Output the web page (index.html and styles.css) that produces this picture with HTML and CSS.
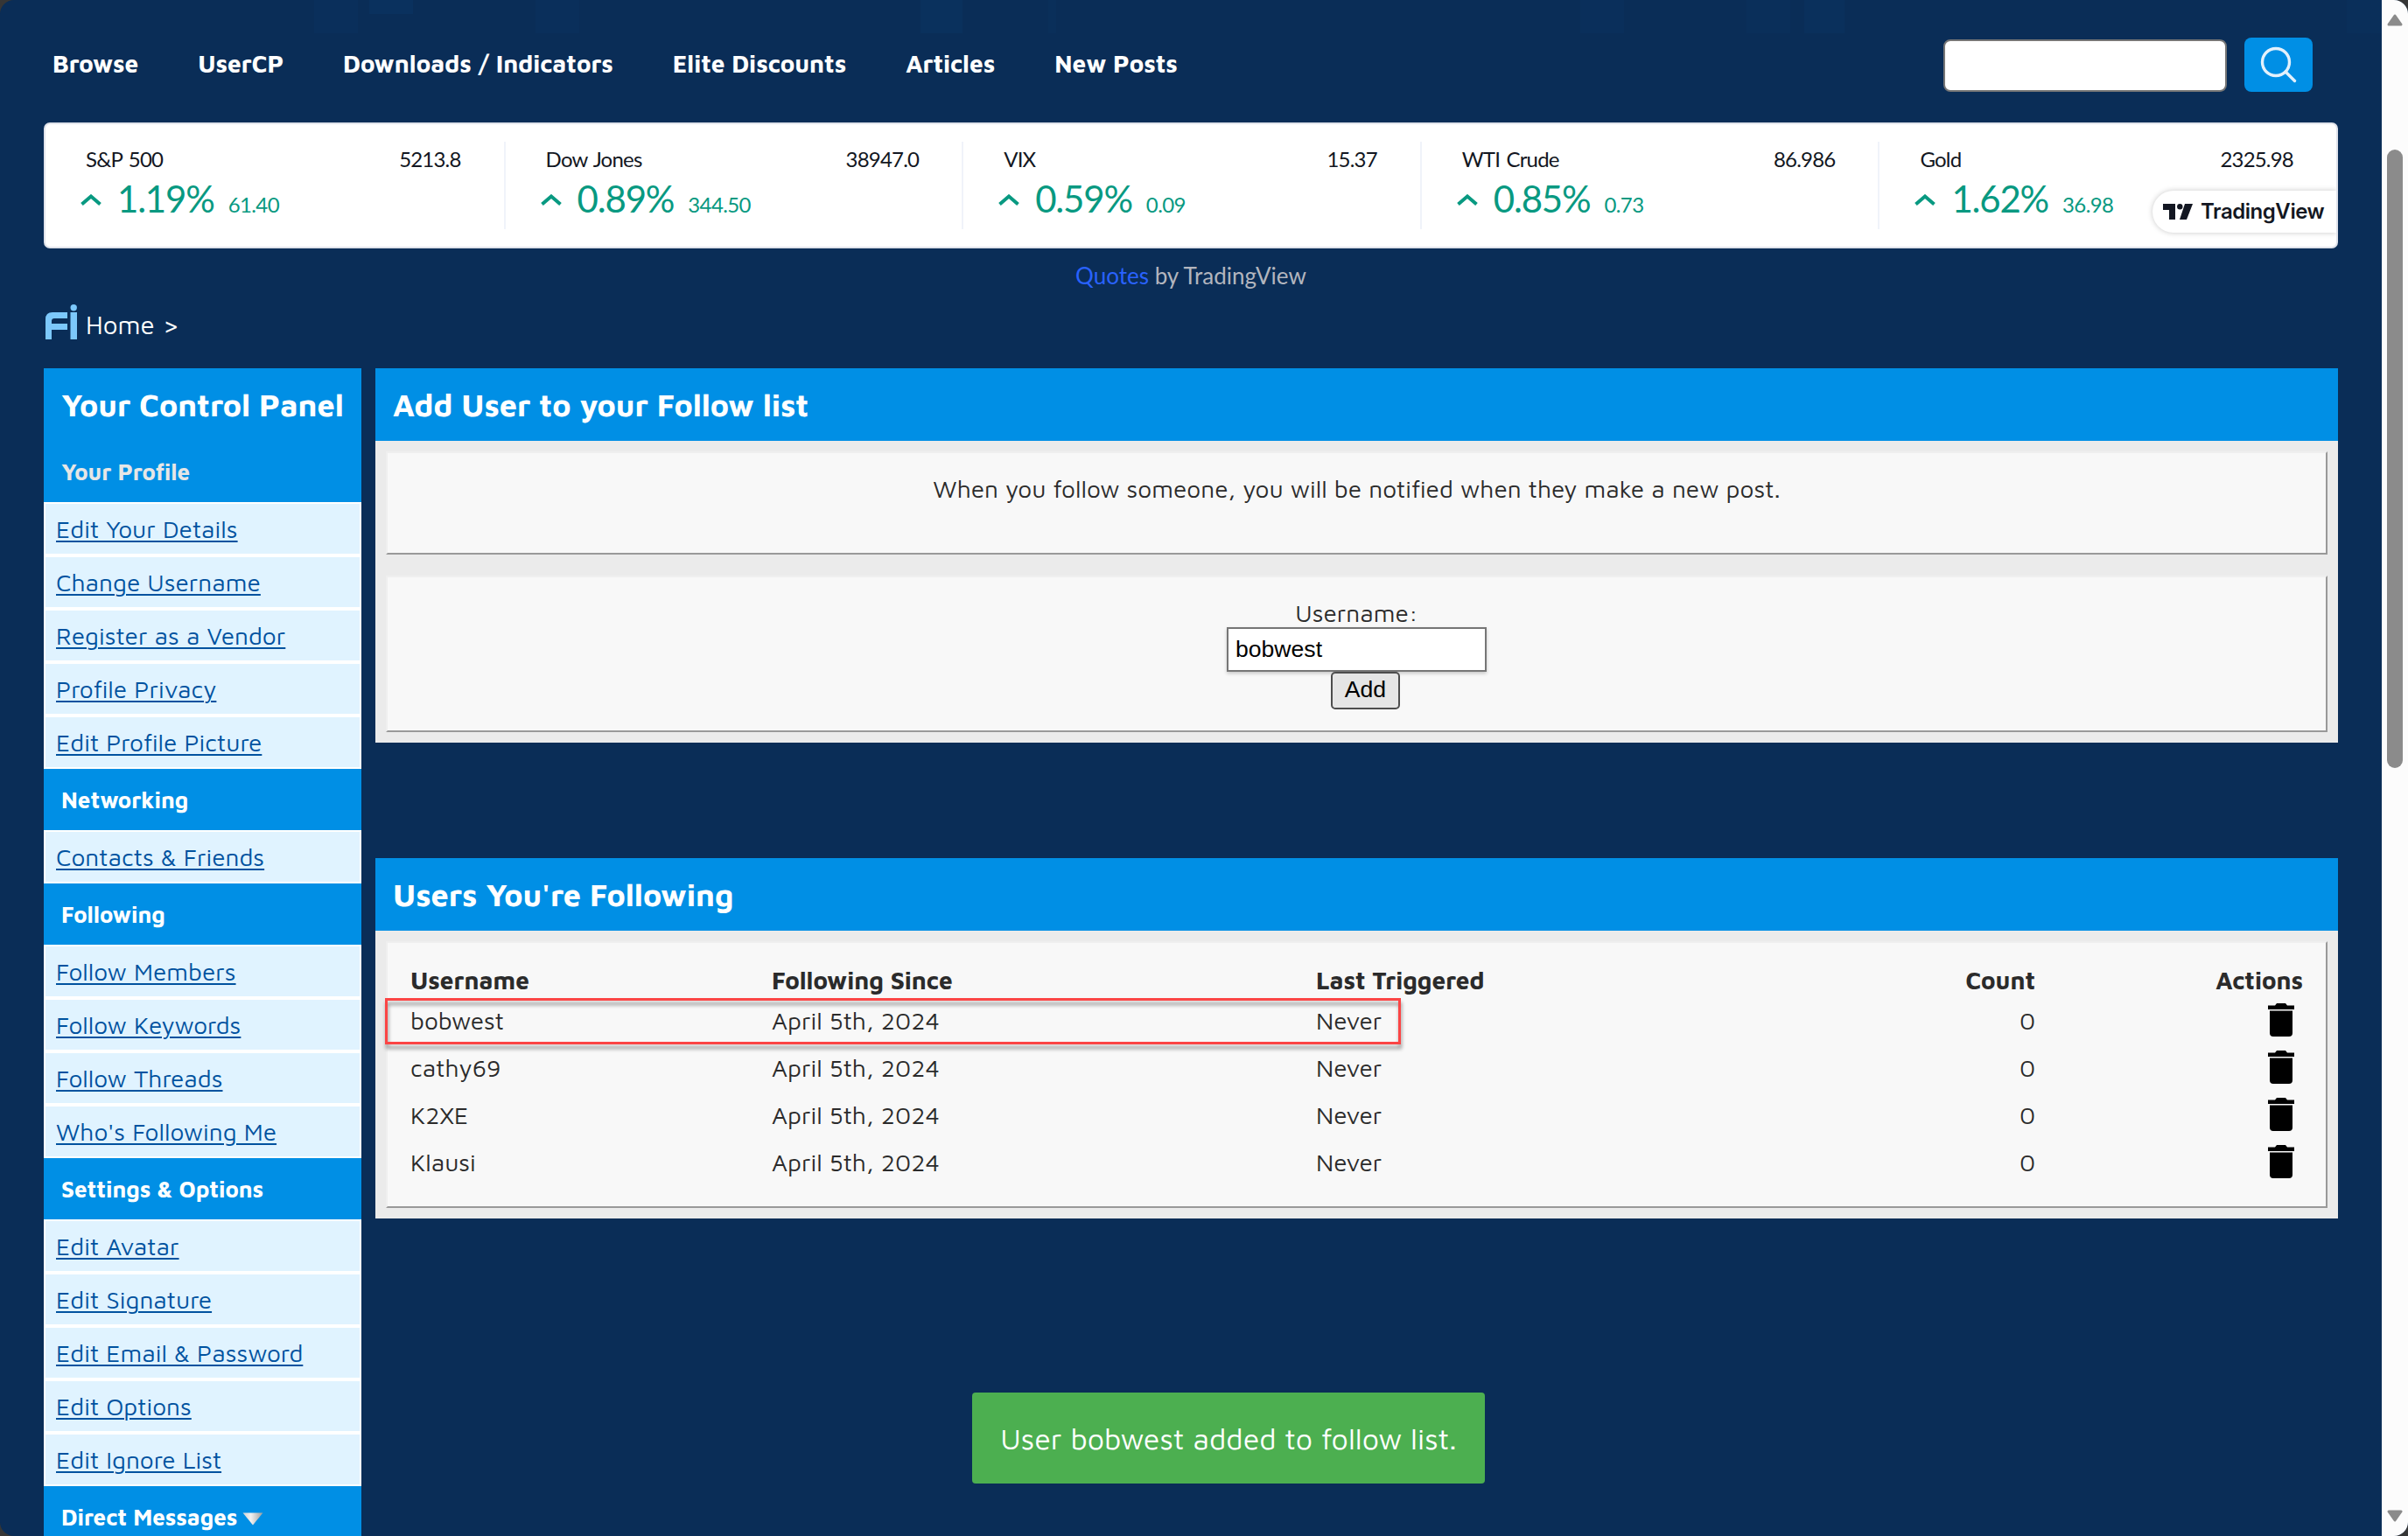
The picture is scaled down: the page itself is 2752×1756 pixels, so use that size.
FILE: index.html
```html
<!DOCTYPE html>
<html lang="en">
<head>
    <meta charset="UTF-8">
    <meta name="viewport" content="width=device-width, initial-scale=1.0">
    <title>Follow List</title>
    <link rel="stylesheet" href="styles.css">
</head>
<body>
    <div class="window">
        <div class="page">
            <header class="header">
                <nav class="nav">
                    <a href="#">Browse</a>
                    <a href="#">UserCP</a>
                    <a href="#">Downloads / Indicators</a>
                    <a href="#">Elite Discounts</a>
                    <a href="#">Articles</a>
                    <a href="#">New Posts</a>
                </nav>
                <form class="search">
                    <input type="text" class="search-input">
                    <button type="button" class="search-btn">
                        <svg width="42" height="42" viewBox="0 0 42 42">
                            <circle cx="18" cy="18" r="15.5" />
                            <path d="M29 29L39.5 39.5" />
                        </svg>
                    </button>
                </form>
            </header>

            <div class="ticker">
                <div class="quote">
                    <div class="quote-top"><span>S&amp;P 500</span><span>5213.8</span></div>
                    <div class="quote-change">
                        <svg class="arrow" width="24" height="13" viewBox="0 0 24 13"><path d="M1.5 11.5L12 2.5L22.5 11.5" /></svg>
                        <span class="percent">1.19%</span><span class="points">61.40</span>
                    </div>
                </div>
                <div class="quote">
                    <div class="quote-top"><span>Dow Jones</span><span>38947.0</span></div>
                    <div class="quote-change">
                        <svg class="arrow" width="24" height="13" viewBox="0 0 24 13"><path d="M1.5 11.5L12 2.5L22.5 11.5" /></svg>
                        <span class="percent">0.89%</span><span class="points">344.50</span>
                    </div>
                </div>
                <div class="quote">
                    <div class="quote-top"><span>VIX</span><span>15.37</span></div>
                    <div class="quote-change">
                        <svg class="arrow" width="24" height="13" viewBox="0 0 24 13"><path d="M1.5 11.5L12 2.5L22.5 11.5" /></svg>
                        <span class="percent">0.59%</span><span class="points">0.09</span>
                    </div>
                </div>
                <div class="quote">
                    <div class="quote-top"><span>WTI Crude</span><span>86.986</span></div>
                    <div class="quote-change">
                        <svg class="arrow" width="24" height="13" viewBox="0 0 24 13"><path d="M1.5 11.5L12 2.5L22.5 11.5" /></svg>
                        <span class="percent">0.85%</span><span class="points">0.73</span>
                    </div>
                </div>
                <div class="quote">
                    <div class="quote-top"><span>Gold</span><span>2325.98</span></div>
                    <div class="quote-change">
                        <svg class="arrow" width="24" height="13" viewBox="0 0 24 13"><path d="M1.5 11.5L12 2.5L22.5 11.5" /></svg>
                        <span class="percent">1.62%</span><span class="points">36.98</span>
                    </div>
                </div>
                <a href="#" class="tv-badge">
                    <svg width="34" height="18" viewBox="0 0 34 18">
                        <path d="M0 0H14V18H7V7H0Z" />
                        <circle cx="19.3" cy="3.2" r="3.2" />
                        <path d="M25 0H34L27 18H19Z" />
                    </svg>
                    <span>TradingView</span>
                </a>
            </div>
            <div class="ticker-credit"><a href="#">Quotes</a> by TradingView</div>

            <div class="breadcrumb">
                <svg class="logo" width="36" height="40" viewBox="0 0 36 40">
                    <path d="M0 40V17Q0 9 8 9H25V16H10Q7 16 7 19V22H25V29H7V40Z" />
                    <path d="M28.5 9H36V40H28.5Z" />
                    <circle cx="32.2" cy="3.7" r="3.7" />
                </svg>
                <a href="#">Home</a>
                <span>&gt;</span>
            </div>

            <div class="columns">
                <aside class="sidebar">
                    <h2 class="bar-title">Your Control Panel</h2>
                    <h3 class="first">Your Profile</h3>
                    <ul>
                        <li><a href="#">Edit Your Details</a></li>
                        <li><a href="#">Change Username</a></li>
                        <li><a href="#">Register as a Vendor</a></li>
                        <li><a href="#">Profile Privacy</a></li>
                        <li><a href="#">Edit Profile Picture</a></li>
                    </ul>
                    <h3>Networking</h3>
                    <ul>
                        <li><a href="#">Contacts &amp; Friends</a></li>
                    </ul>
                    <h3>Following</h3>
                    <ul>
                        <li><a href="#">Follow Members</a></li>
                        <li><a href="#">Follow Keywords</a></li>
                        <li><a href="#">Follow Threads</a></li>
                        <li><a href="#">Who's Following Me</a></li>
                    </ul>
                    <h3>Settings &amp; Options</h3>
                    <ul>
                        <li><a href="#">Edit Avatar</a></li>
                        <li><a href="#">Edit Signature</a></li>
                        <li><a href="#">Edit Email &amp; Password</a></li>
                        <li><a href="#">Edit Options</a></li>
                        <li><a href="#">Edit Ignore List</a></li>
                    </ul>
                    <h3>Direct Messages
                        <svg class="caret" width="24" height="15" viewBox="0 0 24 15">
                            <defs>
                                <linearGradient id="caret-fill" x1="0" y1="0" x2="1" y2="0">
                                    <stop offset="0" stop-color="#d2d2d2" />
                                    <stop offset="0.4" stop-color="#f2f2f2" />
                                    <stop offset="1" stop-color="#9c9c9c" />
                                </linearGradient>
                            </defs>
                            <path d="M0.5 0.5H23.5L12 14.5Z" fill="url(#caret-fill)" />
                        </svg>
                    </h3>
                </aside>

                <main class="main">
                    <section class="panel">
                        <h2 class="bar-title">Add User to your Follow list</h2>
                        <div class="panel-body">
                            <div class="box notice">When you follow someone, you will be notified when they make a new post.</div>
                            <form class="box add-form">
                                <label for="username">Username:</label>
                                <input type="text" id="username" value="bobwest">
                                <button type="button" class="add-btn">Add</button>
                            </form>
                        </div>
                    </section>

                    <section class="panel">
                        <h2 class="bar-title">Users You're Following</h2>
                        <div class="panel-body">
                            <div class="box list-box">
                                <table class="follow-table">
                                    <colgroup>
                                        <col class="col-user">
                                        <col class="col-since">
                                        <col class="col-last">
                                        <col class="col-count">
                                        <col class="col-actions">
                                    </colgroup>
                                    <thead>
                                        <tr>
                                            <th>Username</th>
                                            <th>Following Since</th>
                                            <th>Last Triggered</th>
                                            <th class="right">Count</th>
                                            <th class="right">Actions</th>
                                        </tr>
                                    </thead>
                                    <tbody>
                                        <tr>
                                            <td class="marked">bobwest<div class="mark"></div></td>
                                            <td>April 5th, 2024</td>
                                            <td>Never</td>
                                            <td class="right">0</td>
                                            <td class="right"><svg class="trash" width="30" height="38" viewBox="0 0 30 38"><path d="M0 2.5H8L10 0H20L22 2.5H30V7H0ZM2 8.5H28V34Q28 38 24 38H6Q2 38 2 34Z" /></svg></td>
                                        </tr>
                                        <tr>
                                            <td>cathy69</td>
                                            <td>April 5th, 2024</td>
                                            <td>Never</td>
                                            <td class="right">0</td>
                                            <td class="right"><svg class="trash" width="30" height="38" viewBox="0 0 30 38"><path d="M0 2.5H8L10 0H20L22 2.5H30V7H0ZM2 8.5H28V34Q28 38 24 38H6Q2 38 2 34Z" /></svg></td>
                                        </tr>
                                        <tr>
                                            <td>K2XE</td>
                                            <td>April 5th, 2024</td>
                                            <td>Never</td>
                                            <td class="right">0</td>
                                            <td class="right"><svg class="trash" width="30" height="38" viewBox="0 0 30 38"><path d="M0 2.5H8L10 0H20L22 2.5H30V7H0ZM2 8.5H28V34Q28 38 24 38H6Q2 38 2 34Z" /></svg></td>
                                        </tr>
                                        <tr>
                                            <td>Klausi</td>
                                            <td>April 5th, 2024</td>
                                            <td>Never</td>
                                            <td class="right">0</td>
                                            <td class="right"><svg class="trash" width="30" height="38" viewBox="0 0 30 38"><path d="M0 2.5H8L10 0H20L22 2.5H30V7H0ZM2 8.5H28V34Q28 38 24 38H6Q2 38 2 34Z" /></svg></td>
                                        </tr>
                                    </tbody>
                                </table>
                            </div>
                        </div>
                    </section>
                </main>
            </div>
        </div>

        <div class="scrollbar">
            <svg width="18" height="14" viewBox="0 0 18 14"><path d="M9 2L16 12H2Z" /></svg>
            <div class="thumb"></div>
            <svg class="down" width="18" height="14" viewBox="0 0 18 14"><path d="M9 12L16 2H2Z" /></svg>
        </div>

        <div class="toast">User bobwest added to follow list.</div>
    </div>
</body>
</html>
```
FILE: styles.css
```css
* {
    box-sizing: border-box;
}
body {
    margin: 0;
    background-color: #363636;
    font-family: "Maven Pro", "Noto Sans", sans-serif;
    font-size: 28px;
    color: #2b2b2b;
}
a {
    color: inherit;
    text-decoration: none;
}
h2, h3, ul {
    margin: 0;
    padding: 0;
}
.window {
    display: flex;
    height: 1756px;
    border-radius: 16px;
    overflow: hidden;
    background-color: #0a2d57;
}
.page {
    flex: 1;
    padding: 0 50px;
    background-image:
        linear-gradient(#0a2f5b, #0a2f5b),
        linear-gradient(#0a315e, #0a315e),
        linear-gradient(#0a2f5b, #0a2f5b),
        linear-gradient(#0a315d, #0a315d),
        linear-gradient(#0a2f5a, #0a2f5a),
        linear-gradient(#0a2f5b, #0a2f5b),
        linear-gradient(#0a2f5a, #0a2f5a),
        linear-gradient(#0a305c, #0a305c),
        linear-gradient(#0a2f5a, #0a2f5a);
    background-position: 359px 0, 422px 0, 612px 0, 1052px 0, 1198px 0, 1806px 0, 1996px 0, 2062px 0, 2682px 0;
    background-size: 50px 38px, 50px 16px, 50px 38px, 48px 38px, 9px 38px, 50px 38px, 50px 38px, 46px 38px, 40px 38px;
    background-repeat: no-repeat;
    overflow: hidden;
}

/* header */
.header {
    display: flex;
    justify-content: space-between;
    height: 140px;
    padding: 43px 29px 0 10px;
}
.nav {
    display: flex;
    gap: 68px;
    line-height: 60px;
    font-weight: 700;
    color: #fff;
}
.search {
    display: flex;
    align-items: flex-start;
    gap: 20px;
}
.search-input {
    width: 324px;
    height: 60px;
    margin-top: 2px;
    border: 2px solid #767676;
    border-radius: 8px;
    background-color: #fff;
}
.search-btn {
    width: 78px;
    height: 62px;
    padding: 0 0 1px;
    border: none;
    border-radius: 8px;
    background-color: #008fe5;
}
.search-btn svg {
    display: block;
    margin: 0 auto;
    fill: none;
    stroke: #e3f1fc;
    stroke-width: 3.4;
    stroke-linecap: round;
}

/* ticker */
.ticker {
    position: relative;
    display: grid;
    grid-template-columns: repeat(5, 1fr);
    height: 144px;
    padding: 20px 0;
    border: 2px solid #e0e3eb;
    border-radius: 7px;
    background-color: #fff;
    font-family: "Trebuchet MS", "Lato", sans-serif;
}
.quote {
    height: 100px;
    padding: 0 49px 0 46px;
    border-left: 2px solid #f0f3fa;
}
.quote:first-child {
    padding-left: 44px;
    border-left-color: transparent;
}
.quote-top {
    display: flex;
    justify-content: space-between;
    line-height: 40px;
    font-size: 24px;
    letter-spacing: -0.8px;
    word-spacing: 2px;
    color: #131722;
}
.quote-change {
    display: flex;
    align-items: baseline;
    line-height: 50px;
    margin-left: -6px;
    color: #089981;
}
.arrow {
    position: relative;
    top: -8px;
    margin-right: 18px;
    fill: none;
    stroke: #089981;
    stroke-width: 4;
}
.percent {
    font-size: 42px;
    letter-spacing: -1.2px;
}
.points {
    margin-left: 16px;
    font-size: 24px;
    letter-spacing: -0.6px;
}
.tv-badge {
    position: absolute;
    top: 76px;
    right: 0;
    display: flex;
    align-items: center;
    gap: 9px;
    width: 210px;
    height: 48px;
    padding: 0 0 1px 12px;
    border-radius: 24px 0 0 24px;
    background-color: #fff;
    box-shadow: 0 0 6px rgba(0, 0, 0, 0.22);
    clip-path: inset(-8px 0 -8px -8px);
    font-family: "Inter", sans-serif;
    font-size: 24px;
    font-weight: 600;
    letter-spacing: -0.45px;
    color: #131722;
}
.tv-badge svg {
    fill: #131722;
}
.ticker-credit {
    height: 60px;
    line-height: 62px;
    text-align: center;
    font-family: "Trebuchet MS", "Lato", sans-serif;
    font-size: 26px;
    color: #b2b5be;
}
.ticker-credit a {
    color: #2962ff;
}

/* breadcrumb */
.breadcrumb {
    display: flex;
    height: 77px;
    padding: 2px 0 0 2px;
    line-height: 50px;
    font-size: 29.5px;
    color: #fff;
}
.breadcrumb a {
    margin: 0 9px 0 10px;
}
.logo {
    margin-top: 2px;
    fill: #7cc8fb;
}

.columns {
    display: grid;
    grid-template-columns: 363px 1fr;
    gap: 16px;
}
.bar-title {
    height: 83px;
    padding-left: 20px;
    line-height: 83px;
    background-color: #008fe5;
    font-size: 36px;
    white-space: nowrap;
    color: #fff;
}

/* sidebar */
.sidebar h3 {
    height: 70px;
    padding-left: 20px;
    line-height: 71px;
    background-color: #008fe5;
    font-size: 26px;
    color: #fff;
}
.sidebar h3.first {
    color: #e6e6e6;
}
.sidebar ul {
    list-style: none;
}
.sidebar li {
    height: 61px;
    padding-left: 12px;
    border: 2px solid #fff;
    line-height: 58px;
    background-color: #e0f3ff;
}
.sidebar li a {
    text-decoration: underline;
    text-decoration-thickness: 2px;
    text-underline-offset: 3px;
    color: #00529f;
}
.caret {
    margin-left: -1px;
}

/* panels */
.panel {
    margin-bottom: 132px;
}
.panel-body {
    display: grid;
    gap: 24px;
    padding: 12px;
    background-color: #ebebeb;
}
.box {
    border: 2px solid;
    border-color: #efefef #999 #999 #efefef;
    background-color: #f8f8f8;
}
.notice {
    height: 118px;
    padding-top: 21px;
    line-height: 40px;
    text-align: center;
}
.add-form {
    display: flex;
    flex-direction: column;
    align-items: center;
    height: 179px;
    padding-top: 25px;
}
.add-form label {
    height: 32px;
    line-height: 31px;
}
.add-form input {
    width: 297px;
    height: 51px;
    padding: 0 8px 1px;
    border: 2px solid #767676;
    background-color: #fff;
    box-shadow: 0 2px 4px rgba(0, 0, 0, 0.2);
    font-family: Arial, "Liberation Sans", sans-serif;
    font-size: 26.6px;
    color: #000;
}
.add-btn {
    width: 79px;
    height: 43px;
    margin-left: 20px;
    padding: 0 0 2px;
    border: 2px solid #4d4d4d;
    border-radius: 5px;
    background-color: #e5e5e5;
    font-family: Arial, "Liberation Sans", sans-serif;
    font-size: 26.6px;
    color: #000;
}
.list-box {
    height: 305px;
    padding: 24px 26px 0;
}
.follow-table {
    width: 2163px;
    table-layout: fixed;
    border-collapse: collapse;
}
.col-user {
    width: 413px;
}
.col-since {
    width: 622px;
}
.col-last {
    width: 622px;
}
.col-count {
    width: 200px;
}
.follow-table th {
    height: 38px;
    padding: 0;
    line-height: 38px;
    text-align: left;
    font-weight: 700;
}
.follow-table td {
    height: 54px;
    padding: 0 0 1px;
    line-height: 53px;
}
.follow-table .right {
    text-align: right;
}
.marked {
    position: relative;
}
.mark {
    position: absolute;
    top: 1px;
    left: -29px;
    width: 1161px;
    height: 53px;
    border: 3px solid #fb4545;
    filter: drop-shadow(1px 5px 2px rgba(0, 0, 0, 0.4));
}
.trash {
    display: block;
    margin: 0 10px 1px auto;
    fill: #000;
}

/* window scrollbar */
.scrollbar {
    display: flex;
    flex-direction: column;
    align-items: center;
    width: 30px;
    padding: 16px 0;
    background-color: #fcfcfc;
}
.scrollbar svg {
    fill: #8b8b8b;
    stroke: #8b8b8b;
    stroke-width: 3;
    stroke-linejoin: round;
}
.thumb {
    width: 18px;
    height: 707px;
    margin-top: 141px;
    border-radius: 9px;
    background-color: #8b8b8b;
}
.scrollbar .down {
    margin-top: auto;
}

.toast {
    position: fixed;
    top: 1592px;
    left: 1111px;
    width: 586px;
    height: 104px;
    border-radius: 4px;
    line-height: 104px;
    text-align: center;
    background-color: #4caf50;
    font-size: 34px;
    color: #fff;
}
```
